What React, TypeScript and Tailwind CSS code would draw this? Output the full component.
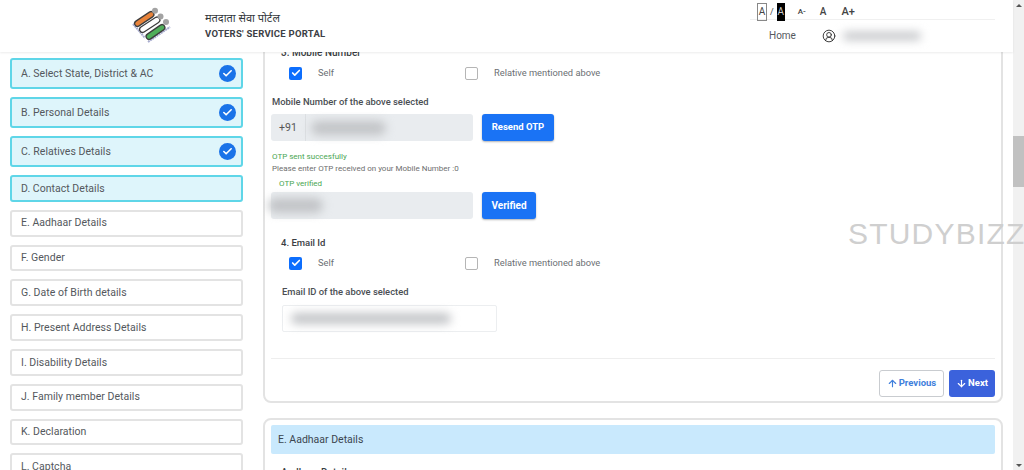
import { ArrowDown, ArrowUp, Check, CircleUserRound } from "lucide-react";

const steps = [
  { label: "A. Select State, District & AC", active: true, done: true },
  { label: "B. Personal Details", active: true, done: true },
  { label: "C. Relatives Details", active: true, done: true },
  { label: "D. Contact Details", active: true, done: false },
  { label: "E. Aadhaar Details", active: false, done: false },
  { label: "F. Gender", active: false, done: false },
  { label: "G. Date of Birth details", active: false, done: false },
  { label: "H. Present Address Details", active: false, done: false },
  { label: "I. Disability Details", active: false, done: false },
  { label: "J. Family member Details", active: false, done: false },
  { label: "K. Declaration", active: false, done: false },
  { label: "L. Captcha", active: false, done: false },
];

function Logo() {
  const bars = [
    { d: "M5.5 16.5L19 7.5", fill: "#e8833a" },
    { d: "M10.5 22.5L25 13", fill: "#ffffff" },
    { d: "M17 29.5L30 20.5", fill: "#4fae5a" },
  ];
  return (
    <svg width="40" height="38" viewBox="0 0 40 38" className="shrink-0">
      <path d="M1 17L13 31M16 35L38 20" stroke="#a9add0" strokeWidth="2" strokeDasharray="2 0.6" fill="none" />
      {bars.map((bar) => (
        <g key={bar.d} fill="none">
          <path d={bar.d} stroke="#3d3d3d" strokeWidth="7" strokeLinecap="round" />
          <path d={bar.d} stroke={bar.fill} strokeWidth="4.5" strokeLinecap="round" />
        </g>
      ))}
      <circle cx="23" cy="3.8" r="3" fill="#a3a3a3" />
      <circle cx="28.5" cy="9.5" r="3" fill="#a3a3a3" />
      <circle cx="34" cy="15" r="3" fill="#a3a3a3" />
    </svg>
  );
}

function Smudge({ className }: { className: string }) {
  return <div className={`rounded-full bg-[#c2c4c7] blur-[5px] ${className}`} />;
}

function Tick({ checked }: { checked: boolean }) {
  return (
    <span
      className={`flex h-[13px] w-[13px] shrink-0 items-center justify-center rounded-[2px] ${
        checked ? "bg-[#0d6efd]" : "border border-[#b5b5b5] bg-white"
      }`}
    >
      {checked && <Check size={10} strokeWidth={4} className="text-white" />}
    </span>
  );
}

function ChoiceRow({ spacing }: { spacing: string }) {
  return (
    <div className={`ml-[18px] flex h-[14px] items-center text-[9.3px] text-[#6b6f73] ${spacing}`}>
      <Tick checked />
      <span className="ml-[16px] w-[147px]">Self</span>
      <Tick checked={false} />
      <span className="ml-[16px]">Relative mentioned above</span>
    </div>
  );
}

export default function App() {
  return (
    <div className="flex h-[470px] w-[1024px] overflow-hidden bg-white font-['Roboto',sans-serif] text-[#54585d]">
      <div className="flex w-[1013px] flex-col">
        <header className="relative z-10 flex h-[52px] shrink-0 items-center bg-white pl-[132px] shadow-[0_1px_2px_rgba(0,0,0,0.08)]">
          <Logo />
          <div className="ml-[33px] mt-[-1px] w-[545px]">
            <p className="text-[11px] leading-[14px] text-[#33373b] font-['Noto_Sans','Noto_Sans_Devanagari','Roboto',sans-serif]">
              मतदाता सेवा पोर्टल
            </p>
            <p className="mt-[3px] text-[9.5px] font-bold leading-[12px] tracking-[0.25px] text-[#3c4045]">
              VOTERS&apos; SERVICE PORTAL
            </p>
          </div>
          <div className="flex w-[245px] flex-col">
            <div className="flex h-[19px] items-start border-b border-[#f0f0f0] pl-[7px] pt-[2px] text-[#444]">
              <span className="flex h-[18px] w-[10px] shrink-0 items-center justify-center border border-[#888] text-[10px] leading-none">A</span>
              <span className="ml-[3px] mt-[3px] text-[9px] leading-[12px]">/</span>
              <span className="ml-[3px] flex h-[18px] w-[8px] shrink-0 items-center justify-center bg-black text-[10px] leading-none text-[#ccc]">A</span>
              <span className="ml-[13px] mt-[3px] text-[8px] font-medium leading-[12px]">A-</span>
              <span className="ml-[14px] mt-[3px] text-[10px] font-medium leading-[12px]">A</span>
              <span className="ml-[15px] mt-[3px] text-[11px] font-medium leading-[12px]">A+</span>
            </div>
            <div className="flex h-[31px] items-center pl-[19px] text-[10px] text-[#55595e]">
              <span>Home</span>
              <CircleUserRound size={14} strokeWidth={1.6} className="ml-[26px] text-[#333]" />
              <Smudge className="ml-[7px] h-[8px] w-[78px]" />
            </div>
          </div>
        </header>

        <div className="flex min-h-0 flex-1">
          <aside className="flex w-[263px] shrink-0 flex-col gap-[8px] overflow-hidden pl-[10px] pr-[20px] pt-[6px]">
            {steps.map((step) => (
              <div
                key={step.label}
                className={`flex shrink-0 items-center justify-between rounded-[3px] border-2 pl-[9px] pr-[5px] text-[10.5px] tracking-[0.03px] ${
                  step.active
                    ? "border-[#5fd6e8] bg-[#def5fb]"
                    : "border-[#e3e3e3] bg-white"
                } ${step.done ? "h-[31px]" : "h-[26.8px]"}`}
              >
                <span>{step.label}</span>
                {step.done && (
                  <span className="flex h-[17px] w-[17px] items-center justify-center rounded-full bg-[#1a73e8]">
                    <Check size={11} strokeWidth={3.5} className="text-white" />
                  </span>
                )}
              </div>
            ))}
          </aside>

          <main className="w-[740px] min-w-0 shrink-0 overflow-hidden">
            <section className="mt-[-20px] h-[371px] rounded-b-[8px] border-2 border-[#e3e3e3] px-[6px]">
              <p className="ml-[10px] mt-[12px] h-[14px] text-[10px] font-medium leading-[14px] text-[#3a3e43]">3. Mobile Number</p>
              <ChoiceRow spacing="mt-[6px]" />
              <p className="ml-px mt-[15px] text-[9.4px] font-medium leading-[14px] text-[#4a4e53]">Mobile Number of the above selected</p>
              <div className="mt-[5px] flex items-center">
                <div className="flex h-[27px] w-[202px] rounded-[3px] bg-[#e9ecef] text-[10.5px] text-[#555]">
                  <span className="flex w-[35px] items-center justify-center border-r border-[#dcdfe2]">+91</span>
                  <Smudge className="ml-[5px] mt-[7px] h-[14px] w-[75px]" />
                </div>
                <button className="ml-[9px] h-[27px] w-[72px] rounded-[3px] bg-[#1a73f5] text-[9.5px] font-bold text-white shadow-[0_1px_2px_rgba(0,0,0,0.3)]">
                  Resend OTP
                </button>
              </div>
              <p className="ml-px mt-[11px] text-[8px] leading-[10px] text-[#4aa653]">OTP sent succesfully</p>
              <p className="ml-px mt-[2px] text-[8px] leading-[10px] text-[#6e6e6e]">Please enter OTP received on your Mobile Number :0</p>
              <p className="ml-[8px] mt-[5px] text-[8px] leading-[10px] text-[#4aa653]">OTP verified</p>
              <div className="mt-[3px] flex items-center">
                <div className="h-[27px] w-[202px] rounded-[3px] bg-[#e9ecef] pt-[6px]">
                  <Smudge className="ml-[-3px] h-[15px] w-[55px]" />
                </div>
                <button className="ml-[9px] h-[27px] w-[54px] rounded-[3px] bg-[#1a73f5] text-[10px] font-bold text-white shadow-[0_1px_2px_rgba(0,0,0,0.3)]">
                  Verified
                </button>
              </div>
              <p className="ml-[10px] mt-[17px] text-[9.5px] font-medium leading-[14px] text-[#3a3e43]">4. Email Id</p>
              <ChoiceRow spacing="mt-[6px]" />
              <p className="ml-[11px] mt-[15px] text-[9.4px] font-medium leading-[14px] text-[#4a4e53]">Email ID of the above selected</p>
              <div className="ml-[11px] mt-[6px] flex h-[27px] w-[215px] items-center rounded-[2px] border border-[#eceef0] bg-white">
                <Smudge className="ml-[8px] h-[11px] w-[160px]" />
              </div>
              <div className="mt-[26px] border-t border-[#eeeeee] pt-[11px]">
                <div className="flex justify-end gap-[5px]">
                  <button className="flex h-[27px] w-[65px] items-center justify-center gap-[1px] rounded-[3px] border border-[#c9ccd0] bg-white text-[9.5px] font-bold text-[#3f7fdc]">
                    <ArrowUp size={11} strokeWidth={2.5} />
                    Previous
                  </button>
                  <button className="flex h-[27px] w-[46px] items-center justify-center gap-[1px] rounded-[3px] bg-[#3b62dc] text-[9.5px] font-bold text-white">
                    <ArrowDown size={11} strokeWidth={2.5} />
                    Next
                  </button>
                </div>
              </div>
            </section>

            <section className="mt-[15px] h-[80px] rounded-t-[8px] border-2 border-[#e3e3e3] px-[6px] pt-[5px]">
              <div className="flex h-[29px] items-center rounded-[2px] bg-[#c9e9fd] pl-[7px] text-[10.5px] text-[#3c4650]">
                E. Aadhaar Details
              </div>
              <p className="ml-[10px] mt-[11px] text-[10px] font-medium text-[#3a3e43]">Aadhaar Details</p>
            </section>
          </main>
        </div>
      </div>

      <div className="relative flex w-[11px] shrink-0 flex-col items-center justify-between bg-[#f1f1f1] pb-[3px] pt-[4px]">
        <div className="h-0 w-0 border-x-[3px] border-b-[3px] border-x-transparent border-b-[#555]" />
        <div className="absolute left-0 top-[136px] h-[51px] w-full bg-[#c1c1c1]" />
        <div className="h-0 w-0 border-x-[3px] border-t-[3px] border-x-transparent border-t-[#555]" />
      </div>

      <span className="pointer-events-none absolute left-[848px] top-[217px] z-20 whitespace-nowrap font-['Liberation_Sans',sans-serif] text-[30px] leading-[34px] tracking-[1.2px] text-[#cfcfcf]">
        STUDYBIZZ
      </span>
    </div>
  );
}
